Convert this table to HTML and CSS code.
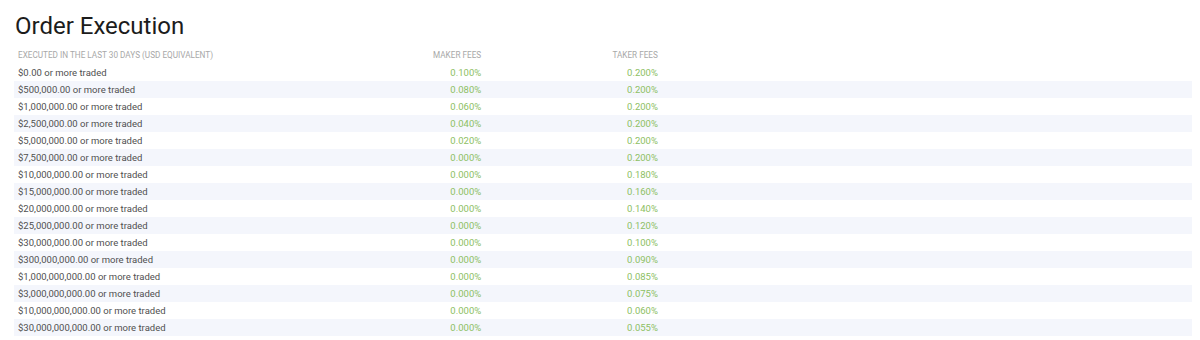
FILE: index.html
```html
<!DOCTYPE html>
<html>
<head>
<meta charset="utf-8">
<link rel="stylesheet" href="styles.css">
</head>
<body>
<div class="page">
  <h1 class="title">Order Execution</h1>
  <table class="fees">
    <colgroup>
      <col class="c-tier"><col class="c-fee"><col class="c-fee"><col class="c-rest">
    </colgroup>
    <thead>
      <tr><th class="tier">Executed in the last 30 days (USD equivalent)</th><th class="num">Maker Fees</th><th class="num">Taker Fees</th><th></th></tr>
    </thead>
    <tbody>
      <tr><td class="tier">$0.00 or more traded</td><td class="num">0.100%</td><td class="num">0.200%</td><td></td></tr>
      <tr><td class="tier">$500,000.00 or more traded</td><td class="num">0.080%</td><td class="num">0.200%</td><td></td></tr>
      <tr><td class="tier">$1,000,000.00 or more traded</td><td class="num">0.060%</td><td class="num">0.200%</td><td></td></tr>
      <tr><td class="tier">$2,500,000.00 or more traded</td><td class="num">0.040%</td><td class="num">0.200%</td><td></td></tr>
      <tr><td class="tier">$5,000,000.00 or more traded</td><td class="num">0.020%</td><td class="num">0.200%</td><td></td></tr>
      <tr><td class="tier">$7,500,000.00 or more traded</td><td class="num">0.000%</td><td class="num">0.200%</td><td></td></tr>
      <tr><td class="tier">$10,000,000.00 or more traded</td><td class="num">0.000%</td><td class="num">0.180%</td><td></td></tr>
      <tr><td class="tier">$15,000,000.00 or more traded</td><td class="num">0.000%</td><td class="num">0.160%</td><td></td></tr>
      <tr><td class="tier">$20,000,000.00 or more traded</td><td class="num">0.000%</td><td class="num">0.140%</td><td></td></tr>
      <tr><td class="tier">$25,000,000.00 or more traded</td><td class="num">0.000%</td><td class="num">0.120%</td><td></td></tr>
      <tr><td class="tier">$30,000,000.00 or more traded</td><td class="num">0.000%</td><td class="num">0.100%</td><td></td></tr>
      <tr><td class="tier">$300,000,000.00 or more traded</td><td class="num">0.000%</td><td class="num">0.090%</td><td></td></tr>
      <tr><td class="tier">$1,000,000,000.00 or more traded</td><td class="num">0.000%</td><td class="num">0.085%</td><td></td></tr>
      <tr><td class="tier">$3,000,000,000.00 or more traded</td><td class="num">0.000%</td><td class="num">0.075%</td><td></td></tr>
      <tr><td class="tier">$10,000,000,000.00 or more traded</td><td class="num">0.000%</td><td class="num">0.060%</td><td></td></tr>
      <tr><td class="tier">$30,000,000,000.00 or more traded</td><td class="num">0.000%</td><td class="num">0.055%</td><td></td></tr>
    </tbody>
  </table>
</div>
</body>
</html>
```

FILE: styles.css
```css
html, body {
  margin: 0;
  padding: 0;
  background: #ffffff;
}
body {
  font-family: Roboto, "Liberation Sans", Arial, sans-serif;
  color: #4a4a4a;
}
.page {
  padding: 8px 8px 0 14px;
}
.title {
  margin: 0 0 3px 1px;
  font-size: 24px;
  font-weight: 400;
  line-height: 36px;
  height: 36px;
  color: #1c1c1c;
}
.fees {
  width: 100%;
  border-collapse: collapse;
  table-layout: fixed;
}
.c-tier { width: 25%; }
.c-fee { width: 15%; }
.c-rest { width: 45%; }
.fees th, .fees td {
  padding: 0 4px;
  height: 17px;
  line-height: 17px;
  white-space: nowrap;
}
.fees th {
  font-size: 8.2px;
  font-weight: 400;
  text-transform: uppercase;
  color: #a8a8a8;
  text-align: left;
}
.fees td {
  font-size: 9.5px;
  color: #505050;
}
.fees .num {
  text-align: right;
}
.fees td.num {
  color: #8dc063;
}
.fees tbody tr:nth-child(even) {
  background: #f4f6fc;
}
```
